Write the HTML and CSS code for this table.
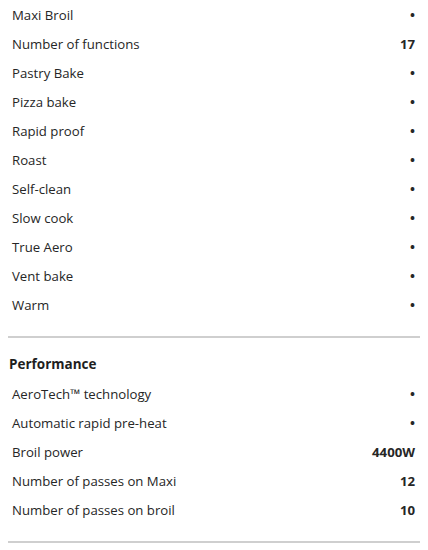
FILE: index.html
```html
<!DOCTYPE html>
<html>
<head>
<meta charset="utf-8">
<link rel="stylesheet" href="styles.css">
</head>
<body>
<div class="specs">
  <div class="group">
    <div class="row"><span class="label">Maxi Broil</span><span class="value">•</span></div>
    <div class="row"><span class="label">Number of functions</span><span class="value">17</span></div>
    <div class="row"><span class="label">Pastry Bake</span><span class="value">•</span></div>
    <div class="row"><span class="label">Pizza bake</span><span class="value">•</span></div>
    <div class="row"><span class="label">Rapid proof</span><span class="value">•</span></div>
    <div class="row"><span class="label">Roast</span><span class="value">•</span></div>
    <div class="row"><span class="label">Self-clean</span><span class="value">•</span></div>
    <div class="row"><span class="label">Slow cook</span><span class="value">•</span></div>
    <div class="row"><span class="label">True Aero</span><span class="value">•</span></div>
    <div class="row"><span class="label">Vent bake</span><span class="value">•</span></div>
    <div class="row"><span class="label">Warm</span><span class="value">•</span></div>
  </div>
  <div class="group">
    <h3 class="group-title">Performance</h3>
    <div class="row"><span class="label">AeroTech™ technology</span><span class="value">•</span></div>
    <div class="row"><span class="label">Automatic rapid pre-heat</span><span class="value">•</span></div>
    <div class="row"><span class="label">Broil power</span><span class="value">4400W</span></div>
    <div class="row"><span class="label">Number of passes on Maxi</span><span class="value">12</span></div>
    <div class="row"><span class="label">Number of passes on broil</span><span class="value">10</span></div>
  </div>
</div>
</body>
</html>
```
FILE: styles.css
```css
html, body {
  margin: 0;
  padding: 0;
  background: #ffffff;
}
body {
  font-family: "Open Sans", "Noto Sans", sans-serif;
  color: #262626;
  font-size: 13.2px;
}
.specs {
  padding: 0 8px;
}
.group {
  border-bottom: 2px solid #cfcfcf;
  padding-bottom: 17px;
}
.group + .group {
  padding-top: 16px;
  padding-bottom: 17px;
}
.group-title {
  margin: 0 0 5px 1px;
  font-size: 13.5px;
  font-weight: 700;
  line-height: 20px;
  color: #1e1e1e;
}
.row {
  display: flex;
  justify-content: space-between;
  align-items: center;
  height: 29px;
  padding: 0 5px 0 4px;
}
.label {
  font-weight: 400;
}
.value {
  font-weight: 700;
}
```
